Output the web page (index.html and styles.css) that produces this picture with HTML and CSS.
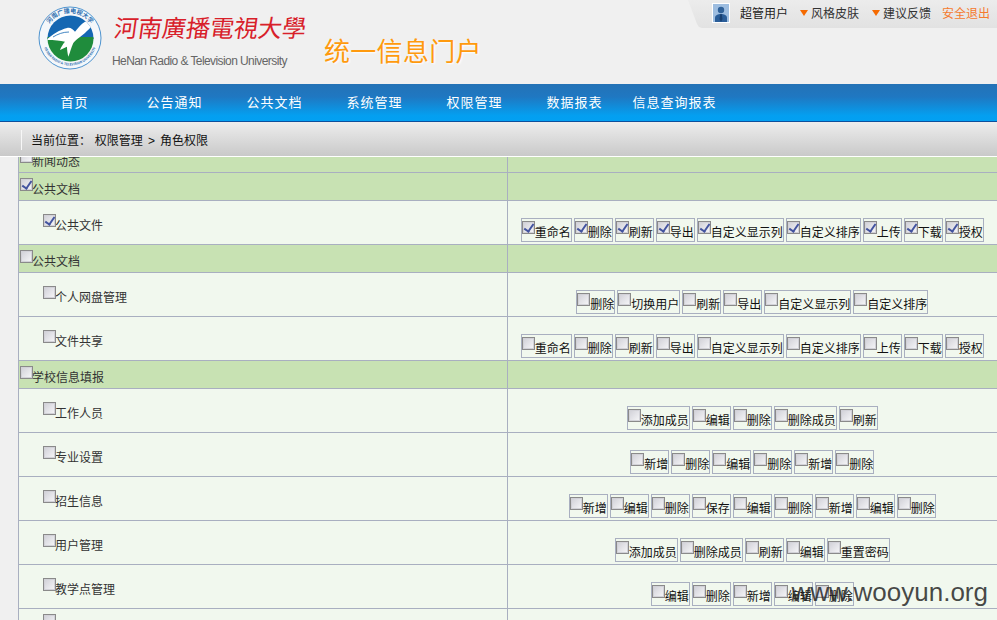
FILE: index.html
```html
<!DOCTYPE html>
<html lang="zh-CN">
<head>
<meta charset="utf-8">
<title>统一信息门户</title>
<link rel="stylesheet" href="styles.css">
</head>
<body>
<header class="top">
  <svg class="logo" viewBox="0 0 64 64" width="64" height="64" aria-label="校徽">
    <defs>
      <path id="arcTop" d="M7 32a25 25 0 0 1 50 0"/>
      <path id="arcBottom" d="M4.500 32a27.500 27.500 0 0 0 55 0"/>
      <clipPath id="inner"><circle cx="32.500" cy="32.500" r="23"/></clipPath>
    </defs>
    <circle cx="32" cy="32" r="31" fill="#f4f7fa" stroke="#4f94cf" stroke-width="1"/>
    <text class="logo-ring" font-size="6" fill="#2e6fb0"><textPath href="#arcTop" startOffset="50%" text-anchor="middle">河南广播电视大学</textPath></text>
    <text class="logo-ring" font-size="3.300" fill="#2e6fb0"><textPath href="#arcBottom" startOffset="50%" text-anchor="middle">HENAN RADIO &amp; TELEVISION UNIVERSITY</textPath></text>
    <g clip-path="url(#inner)">
      <rect x="9" y="9" width="47" height="24" fill="#1467b2"/>
      <rect x="9" y="31" width="47" height="26" fill="#1f8c3c"/>
      <path d="M8 34C14 29 21 24 29 22C32 21 35 23 37 25.700C40 22 43 18 47 15.700C50 15 53 16 55 19C52 22 49 25 47 27L42 31C39 33 37 35 35.300 37C33 42 32 47 30.300 50.700C29.500 47 29 44 29 40.700L22 44C23 41 25 38 27 35.700C22 34.500 16 34 8 34Z" fill="#fff"/>
      <path d="M15 31C20 28 25 26 31 26" fill="none" stroke="#1467b2" stroke-width=".8"/>
    </g>
  </svg>
  <div class="brand">
    <div class="brand-cn">河南廣播電視大學</div>
    <div class="brand-en">HeNan Radio &amp; Television University</div>
  </div>
  <div class="portal">统一信息门户</div>
  <div class="usertab">
    <svg class="avatar" viewBox="0 0 18 20" width="18" height="20">
      <rect width="18" height="20" fill="#fff"/>
      <rect x="1" y="1" width="16" height="18" fill="#9dbde0"/>
      <circle cx="9" cy="7" r="3.200" fill="#2f6199"/>
      <path d="M3 19v-4c0-3 3-4 6-4s6 1 6 4v4z" fill="#2a5d98"/>
      <path d="M8.300 11h1.400l.8 5-1.500 3-1.500-3z" fill="#173f70"/>
    </svg>
    <span class="user">超管用户</span>
    <span class="tri"></span><span class="tlink">风格皮肤</span>
    <span class="tri"></span><span class="tlink">建议反馈</span>
    <span class="logout">安全退出</span>
  </div>
</header>
<nav class="nav">
  <a>首页</a><a>公告通知</a><a>公共文档</a><a>系统管理</a><a>权限管理</a><a>数据报表</a><a>信息查询报表</a>
</nav>
<div class="crumb"><span class="crumb-text">当前位置： 权限管理 <i>&gt;</i> 角色权限</span></div>
<main class="main">
<table class="perm">
<tbody>
<tr class="group"><td class="name"><label class="item"><input type="checkbox" class="cb">新闻动态</label></td><td class="acts"></td></tr>

<tr class="group"><td class="name"><label class="item"><input type="checkbox" class="cb" checked>公共文档</label></td><td class="acts"></td></tr>
<tr class="child"><td class="name"><label class="item"><input type="checkbox" class="cb" checked>公共文件</label></td><td class="acts"><div class="opts">
<label class="opt"><input type="checkbox" class="cb" checked>重命名</label><label class="opt"><input type="checkbox" class="cb" checked>删除</label><label class="opt"><input type="checkbox" class="cb" checked>刷新</label><label class="opt"><input type="checkbox" class="cb" checked>导出</label><label class="opt"><input type="checkbox" class="cb" checked>自定义显示列</label><label class="opt"><input type="checkbox" class="cb" checked>自定义排序</label><label class="opt"><input type="checkbox" class="cb" checked>上传</label><label class="opt"><input type="checkbox" class="cb" checked>下载</label><label class="opt"><input type="checkbox" class="cb" checked>授权</label>
</div></td></tr>

<tr class="group"><td class="name"><label class="item"><input type="checkbox" class="cb">公共文档</label></td><td class="acts"></td></tr>
<tr class="child"><td class="name"><label class="item"><input type="checkbox" class="cb">个人网盘管理</label></td><td class="acts"><div class="opts">
<label class="opt"><input type="checkbox" class="cb">删除</label><label class="opt"><input type="checkbox" class="cb">切换用户</label><label class="opt"><input type="checkbox" class="cb">刷新</label><label class="opt"><input type="checkbox" class="cb">导出</label><label class="opt"><input type="checkbox" class="cb">自定义显示列</label><label class="opt"><input type="checkbox" class="cb">自定义排序</label>
</div></td></tr>
<tr class="child"><td class="name"><label class="item"><input type="checkbox" class="cb">文件共享</label></td><td class="acts"><div class="opts">
<label class="opt"><input type="checkbox" class="cb">重命名</label><label class="opt"><input type="checkbox" class="cb">删除</label><label class="opt"><input type="checkbox" class="cb">刷新</label><label class="opt"><input type="checkbox" class="cb">导出</label><label class="opt"><input type="checkbox" class="cb">自定义显示列</label><label class="opt"><input type="checkbox" class="cb">自定义排序</label><label class="opt"><input type="checkbox" class="cb">上传</label><label class="opt"><input type="checkbox" class="cb">下载</label><label class="opt"><input type="checkbox" class="cb">授权</label>
</div></td></tr>

<tr class="group"><td class="name"><label class="item"><input type="checkbox" class="cb">学校信息填报</label></td><td class="acts"></td></tr>
<tr class="child"><td class="name"><label class="item"><input type="checkbox" class="cb">工作人员</label></td><td class="acts"><div class="opts">
<label class="opt"><input type="checkbox" class="cb">添加成员</label><label class="opt"><input type="checkbox" class="cb">编辑</label><label class="opt"><input type="checkbox" class="cb">删除</label><label class="opt"><input type="checkbox" class="cb">删除成员</label><label class="opt"><input type="checkbox" class="cb">刷新</label>
</div></td></tr>
<tr class="child"><td class="name"><label class="item"><input type="checkbox" class="cb">专业设置</label></td><td class="acts"><div class="opts">
<label class="opt"><input type="checkbox" class="cb">新增</label><label class="opt"><input type="checkbox" class="cb">删除</label><label class="opt"><input type="checkbox" class="cb">编辑</label><label class="opt"><input type="checkbox" class="cb">删除</label><label class="opt"><input type="checkbox" class="cb">新增</label><label class="opt"><input type="checkbox" class="cb">删除</label>
</div></td></tr>
<tr class="child"><td class="name"><label class="item"><input type="checkbox" class="cb">招生信息</label></td><td class="acts"><div class="opts">
<label class="opt"><input type="checkbox" class="cb">新增</label><label class="opt"><input type="checkbox" class="cb">编辑</label><label class="opt"><input type="checkbox" class="cb">删除</label><label class="opt"><input type="checkbox" class="cb">保存</label><label class="opt"><input type="checkbox" class="cb">编辑</label><label class="opt"><input type="checkbox" class="cb">删除</label><label class="opt"><input type="checkbox" class="cb">新增</label><label class="opt"><input type="checkbox" class="cb">编辑</label><label class="opt"><input type="checkbox" class="cb">删除</label>
</div></td></tr>
<tr class="child"><td class="name"><label class="item"><input type="checkbox" class="cb">用户管理</label></td><td class="acts"><div class="opts">
<label class="opt"><input type="checkbox" class="cb">添加成员</label><label class="opt"><input type="checkbox" class="cb">删除成员</label><label class="opt"><input type="checkbox" class="cb">刷新</label><label class="opt"><input type="checkbox" class="cb">编辑</label><label class="opt"><input type="checkbox" class="cb">重置密码</label>
</div></td></tr>
<tr class="child"><td class="name"><label class="item"><input type="checkbox" class="cb">教学点管理</label></td><td class="acts"><div class="opts">
<label class="opt"><input type="checkbox" class="cb">编辑</label><label class="opt"><input type="checkbox" class="cb">删除</label><label class="opt"><input type="checkbox" class="cb">新增</label><label class="opt"><input type="checkbox" class="cb">编辑</label><label class="opt"><input type="checkbox" class="cb">删除</label>
</div></td></tr>
<tr class="child tail"><td class="name"><label class="item"><input type="checkbox" class="cb"></label></td><td class="acts"></td></tr>
</tbody>
</table>
</main>
<div class="watermark">www.wooyun.org</div>
</body>
</html>
```
FILE: styles.css
```css
* { box-sizing: border-box; }
html, body { margin: 0; height: 100%; }
body {
  height: 620px;
  overflow: hidden;
  display: flex;
  flex-direction: column;
  font: 12px/12px "Noto Sans CJK SC", "Liberation Sans", sans-serif;
  color: #222;
  background: #f0f0f0;
}

/* header */
.top {
  flex: 0 0 84px;
  display: flex;
  align-items: flex-start;
  padding-left: 38px;
  background: #f0f0f0;
}
.logo { margin-top: 6px; flex: none; }
.logo-ring { font-family: "Noto Sans CJK SC", sans-serif; font-weight: 700; }
.brand { margin-left: 10px; width: 212px; flex: none; }
.brand-cn {
  margin-top: 9px;
  font-size: 24px;
  line-height: 36px;
  font-weight: 400;
  color: #d8202a;
  white-space: nowrap;
  transform: skewX(-8deg);
  transform-origin: left bottom;
}
.brand-en {
  margin-top: 9px;
  font: 12px/14px "Liberation Sans", sans-serif;
  letter-spacing: -.58px;
  color: #666;
  white-space: nowrap;
}
.portal {
  margin-top: 32px;
  font-size: 26px;
  line-height: 36px;
  letter-spacing: .3px;
  font-weight: 400;
  color: #ff9a0e;
  text-shadow: 1px 1px 2px #fff;
  white-space: nowrap;
  flex: none;
}
.usertab {
  margin-left: auto;
  flex: none;
  width: 309px;
  height: 28px;
  display: flex;
  align-items: center;
  padding: 0 0 2px 24px;
  color: #222;
  background: linear-gradient(#ececec, #e2e2e2);
  clip-path: polygon(0 0, 100% 0, 100% 100%, 14px 100%, 11px 27px, 9px 24px);
}
.avatar { flex: none; margin-right: 10px; }
.user { margin-right: 12px; }
.tri {
  width: 0;
  height: 0;
  margin-right: 3px;
  border: 4px solid transparent;
  border-top: 6px solid #f56a00;
  border-bottom: 0;
  flex: none;
}
.tlink { margin-right: 13px; color: #333; }
.logout { margin-left: -2px; color: #f57a2e; }

/* nav */
.nav {
  flex: 0 0 38px;
  display: flex;
  padding-left: 24.500px;
  background: linear-gradient(#2472b6 0, #1f78c2 35%, #049ff0 85%, #02a0f2 100%);
  border-bottom: 1px solid #0d4f9c;
}
.nav a {
  width: 100px;
  flex: none;
  text-align: center;
  color: #fff;
  font-size: 13px;
  line-height: 35px;
  letter-spacing: 1px;
  white-space: nowrap;
}

/* breadcrumb */
.crumb {
  flex: 0 0 34px;
  display: flex;
  align-items: center;
  padding-left: 21px;
  background: linear-gradient(#ededed, #c9c9c9);
}
.crumb-text {
  height: 20px;
  padding: 4px 0 0 9px;
  margin-top: 2px;
  border-left: 1px solid #f7f7f7;
  color: #111;
  white-space: pre;
  word-spacing: 1px;
}
.crumb-text i { font-style: normal; font-family: "Liberation Sans", sans-serif; margin: 0 1.500px; }

/* permission table */
.main {
  flex: 1;
  min-height: 0;
  overflow: hidden;
  padding-left: 18px;
  border-top: 1px solid #fff;
}
.perm {
  width: 979px;
  margin-top: -12px;
  table-layout: fixed;
  border-collapse: separate;
  border-spacing: 0;
}
.perm td {
  padding: 0;
  vertical-align: top;
  border-bottom: 1px solid #a9afc0;
}
.perm .name {
  width: 490px;
  border-left: 1px solid #a9afc0;
  border-right: 1px solid #a9afc0;
}
.group td { height: 28px; background: #c8e2b3; }
.child td { height: 44px; background: #f1f8ee; }

/* row labels: the text sits lower than its checkbox */
.item {
  display: flex;
  align-items: flex-start;
  padding: 10px 0 0 1px;
  color: #333;
  white-space: nowrap;
}
.item .cb { margin: -5px -1px 0 0; }
.child .item { padding: 18px 0 0 24px; }
.child .item .cb { margin-top: -5px; }
.tail .item { padding-top: 10px; }

.cb {
  appearance: none;
  position: relative;
  flex: none;
  width: 13px;
  height: 13px;
  margin: 0;
  border: 1px solid #8a8a8a;
  background: linear-gradient(135deg, #cfcfd6, #f7f7f9);
  box-shadow: inset 0 0 0 1px #d2d2d8;
}
.cb:checked::after {
  content: "";
  position: absolute;
  left: 3px;
  top: 0;
  width: 4px;
  height: 8px;
  border-right: 2px solid #43549f;
  border-bottom: 2px solid #43549f;
  transform: rotate(35deg);
}

/* permission options */
.opts {
  display: flex;
  justify-content: center;
  gap: 2px;
  padding: 17px .500px 0 0;
}
.opt {
  display: flex;
  align-items: flex-start;
  height: 24px;
  padding-top: 7px;
  border: 1px solid #a9afc0;
  color: #111;
  white-space: nowrap;
}
.opt .cb { margin-top: -5px; }

.watermark {
  position: absolute;
  right: 9px;
  top: 575px;
  font: 26px/34px "Liberation Sans", sans-serif;
  color: rgba(40, 40, 40, .85);
}
```
